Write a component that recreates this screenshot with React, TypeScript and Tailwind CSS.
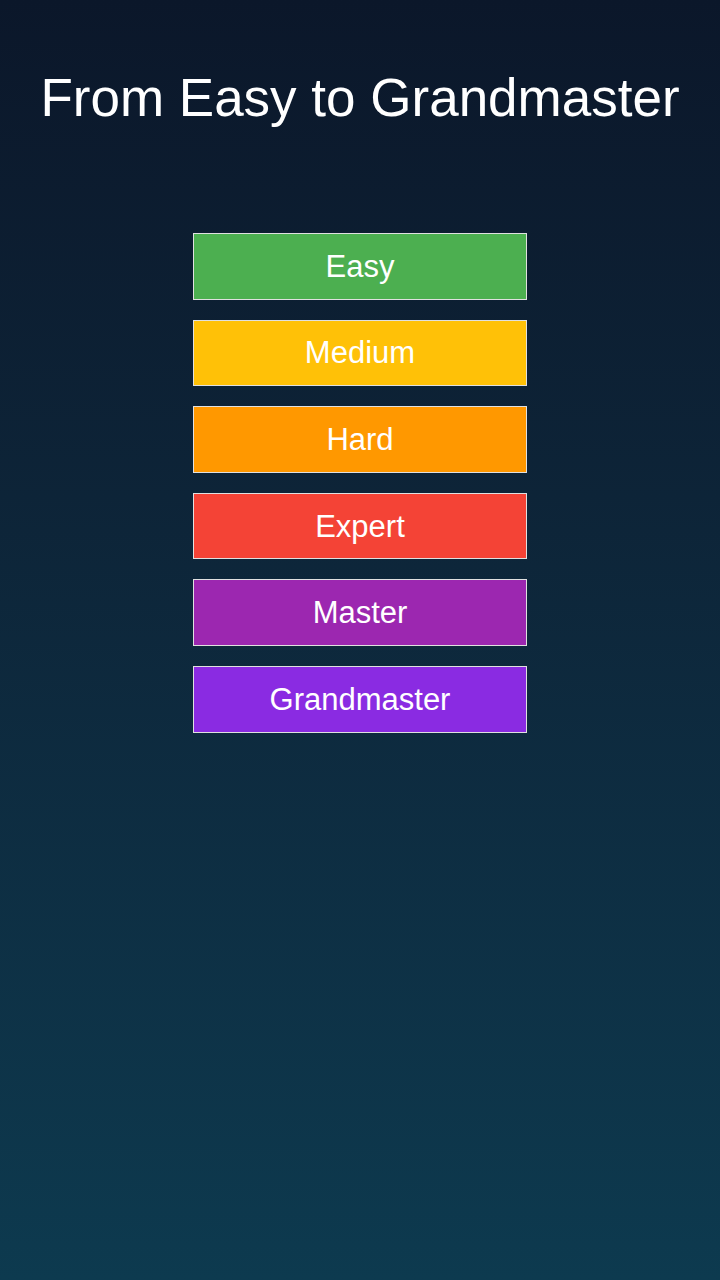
import React from "react";

const levels = [
  { name: "Easy", bg: "bg-[#4caf50]" },
  { name: "Medium", bg: "bg-[#ffc107]" },
  { name: "Hard", bg: "bg-[#ff9800]" },
  { name: "Expert", bg: "bg-[#f44336]" },
  { name: "Master", bg: "bg-[#9c27b0]" },
  { name: "Grandmaster", bg: "bg-[#8a2be2]" },
];

export default function App() {
  return (
    <div
      className="w-[720px] h-[1280px] bg-gradient-to-b from-[#0b172a] to-[#0d3a4f] flex flex-col items-center"
      style={{ fontFamily: '"Liberation Sans", Arial, sans-serif' }}
    >
      <h1 className="pt-[71px] text-[53px] leading-none text-white">From Easy to Grandmaster</h1>
      <div className="mt-[109px] flex flex-col gap-[20px]">
        {levels.map((l) => (
          <div
            key={l.name}
            className={`w-[334px] h-[66.6px] border border-[#e0e0e0] ${l.bg} flex items-center justify-center text-white text-[31px] leading-none`}
          >
            {l.name}
          </div>
        ))}
      </div>
    </div>
  );
}
